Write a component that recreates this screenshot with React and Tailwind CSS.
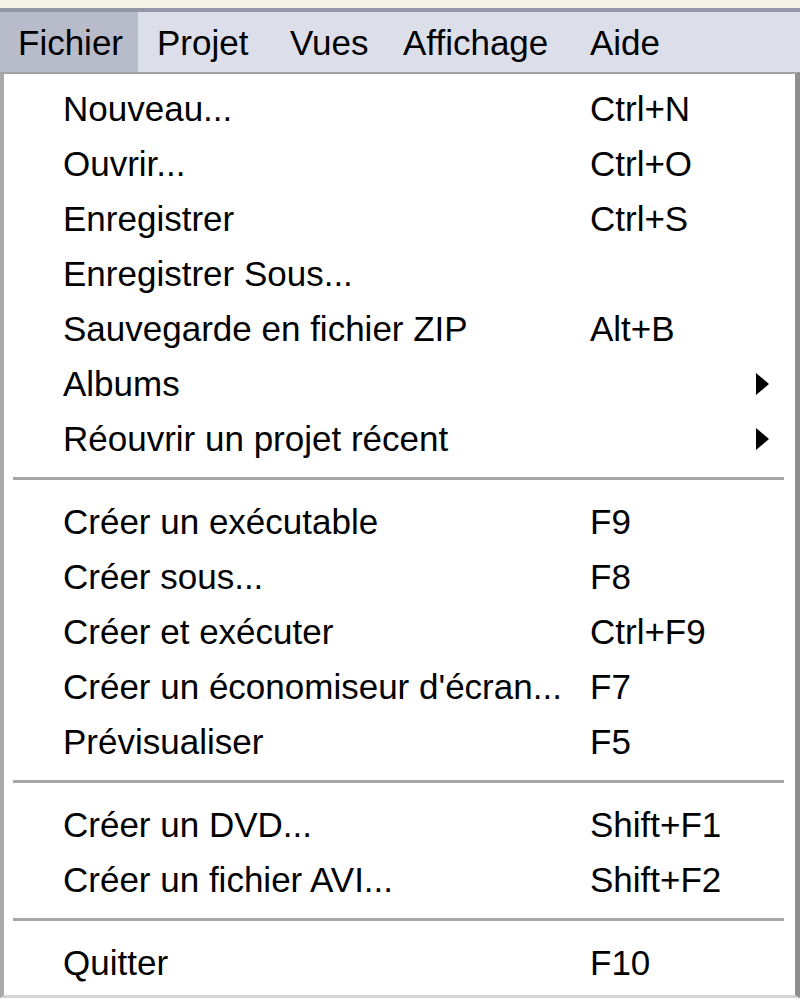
import React from 'react';

// --- Menu data ---
const groups = [
  [
    { label: 'Nouveau...', shortcut: 'Ctrl+N' },
    { label: 'Ouvrir...', shortcut: 'Ctrl+O' },
    { label: 'Enregistrer', shortcut: 'Ctrl+S' },
    { label: 'Enregistrer Sous...' },
    { label: 'Sauvegarde en fichier ZIP', shortcut: 'Alt+B' },
    { label: 'Albums', submenu: true },
    { label: 'Réouvrir un projet récent', submenu: true },
  ],
  [
    { label: 'Créer un exécutable', shortcut: 'F9' },
    { label: 'Créer sous...', shortcut: 'F8' },
    { label: 'Créer et exécuter', shortcut: 'Ctrl+F9' },
    { label: "Créer un économiseur d'écran...", shortcut: 'F7' },
    { label: 'Prévisualiser', shortcut: 'F5' },
  ],
  [
    { label: 'Créer un DVD...', shortcut: 'Shift+F1' },
    { label: 'Créer un fichier AVI...', shortcut: 'Shift+F2' },
  ],
  [{ label: 'Quitter', shortcut: 'F10' }],
];

const Arrow = () => (
  <svg width="13" height="22" viewBox="0 0 13 22" className="block">
    <path d="M0 0 L13 11 L0 22 Z" fill="#000" />
  </svg>
);

const MenuRow = ({ label, shortcut, submenu }) => (
  <div className="flex items-center h-[55px] pl-[59px] leading-none">
    <span className="w-[527px] shrink-0 whitespace-nowrap">{label}</span>
    <span className="flex-1 whitespace-nowrap">{shortcut}</span>
    {submenu && (
      <span className="mr-[26px]">
        <Arrow />
      </span>
    )}
  </div>
);

const Separator = () => (
  <div className="h-[28px] pt-[11px] ml-[9px] mr-[11px]">
    <div className="h-[3px] bg-[#a6a6a6]" />
  </div>
);

export default function App() {
  return (
    <div
      className="w-[800px] h-[999px] bg-white text-black text-[35px] overflow-hidden"
      style={{ fontFamily: '"Liberation Sans", Arial, sans-serif' }}
    >
      {/* top strip of the window */}
      <div className="h-[8px] bg-[#f4f3e7]" />
      <div className="h-[4px] bg-[#9395a8]" />

      {/* menu bar */}
      <div className="flex h-[60px] bg-[#dcdfe9] leading-none">
        <div className="flex items-center w-[138px] pl-[18px] bg-[#b8bbc9]">Fichier</div>
        <div className="flex items-center w-[133px] pl-[19px]">Projet</div>
        <div className="flex items-center w-[113px] pl-[19px]">Vues</div>
        <div className="flex items-center w-[187px] pl-[19px]">Affichage</div>
        <div className="flex items-center pl-[19px]">Aide</div>
      </div>

      {/* dropdown */}
      <div className="border-t-2 border-l-4 border-r-[5px] border-b-[3px] border-t-[#a3a3a3] border-l-[#a9a9a9] border-r-[#8f8f8f] border-b-[#d4d4d4] bg-white pt-[7px] pb-[5px]">
        {groups.map((group, gi) => (
          <React.Fragment key={gi}>
            {gi > 0 && <Separator />}
            {group.map((item) => (
              <MenuRow key={item.label} {...item} />
            ))}
          </React.Fragment>
        ))}
      </div>
    </div>
  );
}
